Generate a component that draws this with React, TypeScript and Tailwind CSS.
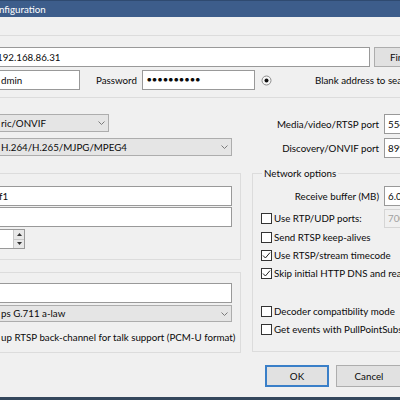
import React from 'react';

const font = "font-['Lato','Noto_Sans',sans-serif]";

function Chevron() {
    return (
        <svg width="7" height="4" viewBox="0 0 7 4" className="shrink-0">
            <path d="M0.5 0.5 L3.5 3.5 L6.5 0.5" fill="none" stroke="#7a7a7a" strokeWidth="1" />
        </svg>
    );
}

function Combo({ text, className }: { text: string; className: string }) {
    return (
        <div className={`flex items-center justify-between bg-[#e5e5e5] border border-l-0 border-[#adadad] pl-px pr-[3px] ${className}`}>
            <span className="whitespace-nowrap">{text}</span>
            <Chevron />
        </div>
    );
}

function Check({ checked, label }: { checked?: boolean; label: string }) {
    return (
        <div className="flex items-center h-[18px] whitespace-nowrap">
            <div className="w-[11px] h-[11px] shrink-0 border border-[#333] bg-white flex items-center justify-center">
                {checked && (
                    <svg width="9" height="9" viewBox="0 0 9 9">
                        <path d="M1 4.5 L3.4 7 L8 1.6" fill="none" stroke="#222" strokeWidth="1" />
                    </svg>
                )}
            </div>
            <span className="ml-[2px]">{label}</span>
        </div>
    );
}

function Arrow({ up }: { up?: boolean }) {
    return (
        <svg width="5" height="3" viewBox="0 0 5 3">
            <path d={up ? 'M0 3 L2.5 0 L5 3 Z' : 'M0 0 L2.5 3 L5 0 Z'} fill="#333" />
        </svg>
    );
}

export default function App() {
    return (
        <div className={`w-[400px] h-[400px] overflow-hidden bg-[#f0f0f0] flex flex-col text-[9.75px] text-[#0a0a0a] ${font}`}>
            {/* Title bar */}
            <div className="h-[17px] shrink-0 bg-[#3d5d8b] border-t border-[#2f4a70] flex items-center text-white whitespace-nowrap">
                <span className="-ml-px">nfiguration</span>
            </div>

            <div className="h-[18px] shrink-0" />

            {/* Camera group */}
            <div className="shrink-0 border-y border-[#dcdcdc] pt-[11px] pb-[7px] w-[480px]">
                <div className="flex h-[20px] gap-[4px]">
                    <div className="w-[370px] bg-white border border-l-0 border-[#999] flex items-center whitespace-nowrap">
                        <span className="-ml-[3px]">192.168.86.31</span>
                    </div>
                    <div className="w-[76px] bg-[#e1e1e1] border border-[#adadad] flex items-center pl-[15px]">Find...</div>
                </div>
                <div className="flex h-[20px] mt-[3px] items-center">
                    <div className="w-[80px] h-[20px] bg-white border border-l-0 border-[#999] flex items-center pl-px">dmin</div>
                    <span className="ml-[16px]">Password</span>
                    <div className="ml-[5px] w-[113px] h-[20px] bg-white border border-[#999] flex items-center pl-[4px] text-[7.5px] tracking-[0.9px]">
                        ●●●●●●●●●●
                    </div>
                    <svg width="11" height="11" viewBox="0 0 11 11" className="ml-[6px]">
                        <circle cx="5.5" cy="5.5" r="4.5" fill="#f7f7f7" stroke="#8c8c8c" strokeWidth="1" />
                        <circle cx="5.5" cy="5.5" r="2" fill="#111" />
                    </svg>
                    <span className="ml-[43px] whitespace-nowrap">Blank address to search</span>
                </div>
            </div>

            {/* Main columns */}
            <div className="flex shrink-0 gap-[11px]">
                {/* Left column */}
                <div className="w-[241px] shrink-0 pt-[16px]">
                    <Combo text="ric/ONVIF" className="w-[109px] h-[18px]" />
                    <Combo text="H.264/H.265/MJPG/MPEG4" className="w-[232px] h-[18px] mt-[6px] pl-[2px]" />

                    <div className="mt-[17px] border border-l-0 border-[#dcdcdc] pt-[12px] pb-[10px] pr-[8px]">
                        <div className="h-[20px] bg-white border border-l-0 border-[#999] flex items-center whitespace-nowrap">
                            <span className="-ml-px">f1</span>
                        </div>
                        <div className="h-[20px] mt-px bg-white border border-l-0 border-[#999]" />
                        <div className="flex h-[20px] w-[25px] mt-[2px] border border-l-0 border-[#999] bg-white">
                            <div className="flex-1" />
                            <div className="w-[11px] flex flex-col border-l border-[#c8c8c8]">
                                <div className="flex-1 bg-[#e8e8e8] border-b border-[#c8c8c8] flex items-center justify-center">
                                    <Arrow up />
                                </div>
                                <div className="flex-1 bg-[#e8e8e8] flex items-center justify-center">
                                    <Arrow />
                                </div>
                            </div>
                        </div>
                    </div>

                    <div className="mt-[12px] border border-l-0 border-[#dcdcdc] pt-[10px] pb-[7px] pr-[8px]">
                        <div className="h-[20px] bg-white border border-l-0 border-[#999]" />
                        <Combo text="ps G.711 a-law" className="h-[17px] mt-[2px]" />
                        <div className="mt-[8px] h-[15px] flex items-center whitespace-nowrap pl-px">
                            up RTSP back-channel for talk support (PCM-U format)
                        </div>
                    </div>
                </div>

                {/* Right column */}
                <div className="w-[230px] shrink-0 pt-[16px]">
                    <div className="flex h-[20px] items-center">
                        <span className="w-[127px] text-right whitespace-nowrap">Media/video/RTSP port</span>
                        <div className="ml-[5px] w-[44px] h-[20px] bg-white border border-[#999] flex items-center pl-[3px]">554</div>
                    </div>
                    <div className="flex h-[20px] items-center mt-[4px]">
                        <span className="w-[127px] text-right whitespace-nowrap">Discovery/ONVIF port</span>
                        <div className="ml-[5px] w-[44px] h-[20px] bg-white border border-[#999] flex items-center pl-[3px]">8999</div>
                    </div>

                    <fieldset className="mt-[8px] border border-[#dcdcdc] pb-[13px] pl-[8px]">
                        <legend className="ml-px px-[2px] leading-[15px] h-[15px]">Network options</legend>
                        <div className="flex h-[20px] items-center mt-[5px] -ml-[8px]">
                            <span className="w-[126px] text-right whitespace-nowrap">Receive buffer (MB)</span>
                            <div className="ml-[5px] w-[44px] h-[20px] bg-white border border-[#999] flex items-center pl-[3px]">6.00</div>
                        </div>
                        <div className="flex h-[20px] items-center mt-[2px]">
                            <div className="w-[123px]">
                                <Check label="Use RTP/UDP ports:" />
                            </div>
                            <div className="w-[44px] h-[19px] border border-[#d5d5d5] flex items-center pl-[3px] text-[#a0a0a0]">7000</div>
                        </div>
                        <Check label="Send RTSP keep-alives" />
                        <Check checked label="Use RTSP/stream timecode" />
                        <Check checked label="Skip initial HTTP DNS and read" />
                        <div className="mt-[20px]">
                            <Check label="Decoder compatibility mode" />
                            <Check label="Get events with PullPointSubscription" />
                        </div>
                    </fieldset>
                </div>
            </div>

            {/* Buttons */}
            <div className="flex gap-[7px] pl-[265px] mt-[12px] shrink-0">
                <div className="w-[64px] h-[22px] shrink-0 bg-[#e1e1e1] border-2 border-[#3a7fc8] flex items-center justify-center">OK</div>
                <div className="w-[66px] h-[22px] shrink-0 bg-[#e1e1e1] border border-[#adadad] flex items-center justify-center">Cancel</div>
            </div>

            <div className="mt-auto h-[3px] shrink-0 bg-[#34475c]" />
        </div>
    );
}
